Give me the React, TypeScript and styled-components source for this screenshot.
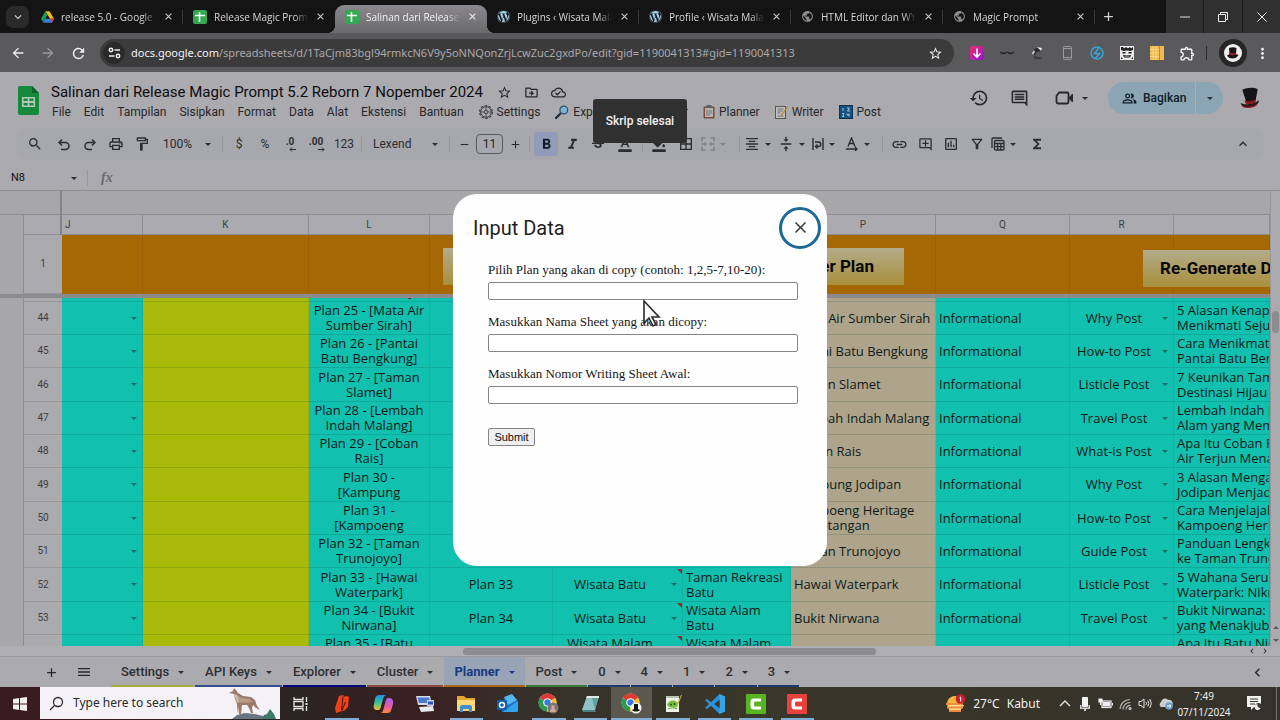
import React from 'react';
import styled, { createGlobalStyle, css } from 'styled-components';
import {
  MdAdd, MdArrowBack, MdArrowForward, MdBorderAll, MdChevronLeft, MdChevronRight, MdClose, MdFormatAlignCenter, MdFormatBold,
  MdFormatColorFill, MdFormatColorText, MdFormatItalic, MdFunctions, MdHistory, MdKeyboardArrowUp, MdLink, MdMenu,
  MdMoreVert, MdOutlineAddComment, MdOutlineCloudDone, MdOutlineDriveFileMove, MdOutlineExtension,
  MdOutlineFilterAlt, MdOutlineFormatPaint, MdOutlineInsertChart, MdOutlineInsertComment, MdOutlineLocalPrintshop,
  MdOutlinePeopleAlt, MdOutlineSettings, MdPublic, MdRefresh, MdRemove, MdSearch,
  MdStarBorder, MdStrikethroughS, MdVerticalAlignCenter, MdKeyboardArrowDown,
} from 'react-icons/md';
import { FaWordpress } from 'react-icons/fa';

const GlobalStyle = createGlobalStyle`
  *, *::before, *::after { box-sizing: border-box; }
  body { margin: 0; background: #a9a9ac; overflow: hidden; }
  button, input { font: inherit; color: inherit; }
  button { background: none; border: 0; padding: 0; }
  svg { display: block; flex: none; }
`;

const ui = '"Roboto", "Liberation Sans", sans-serif';
const win = '"Noto Sans", "Open Sans", sans-serif';
const cellFont = '"Open Sans", "Noto Sans", sans-serif';

const Screen = styled.div`
  display: flex;
  flex-direction: column;
  height: 100vh;
  font-family: ${ui};
  font-size: 12px;
`;

const Caret = styled.span<{ $color?: string; $up?: boolean }>`
  width: 0;
  height: 0;
  margin: 0 1px;
  flex: none;
  border: 3px solid transparent;
  border-top-color: ${(p) => p.$color ?? '#2c2d31'};
  border-bottom: 0;
  transform: ${(p) => (p.$up ? 'rotate(180deg)' : 'none')};
`;

/* ---------- browser tab strip ---------- */

const TabStrip = styled.div`
  display: flex;
  height: 33px;
  flex: none;
  background: #141415;
  color: #d6d6d6;
`;

const TabSearch = styled.button`
  width: 23px;
  height: 22px;
  margin: 6px 2px 0 6px;
  border-radius: 7px;
  background: #2a2a2b;
  display: grid;
  place-items: center;
`;

const BrowserTabBox = styled.div<{ $active?: boolean; $line?: boolean }>`
  flex: 0 1 152px;
  min-width: 0;
  position: relative;
  display: flex;
  align-items: center;
  gap: 7px;
  padding: 0 9px 0 10px;
  font: 10px/16px ${cellFont};

  ${(p) => p.$line && css`
    &::after {
      content: '';
      position: absolute;
      right: 0;
      width: 1px;
      height: 14px;
      background: #3a3a3b;
    }
  `}

  ${(p) => p.$active && css`
    margin-top: 5px;
    padding-bottom: 5px;
    color: #f2f2f2;
    background: linear-gradient(#8a888c, #6a696c);
    border-radius: 9px 9px 0 0;
    &::before, &::after {
      content: '';
      position: absolute;
      bottom: 0;
      width: 8px;
      height: 8px;
      background: radial-gradient(circle at 0 0, transparent 8px, #6a696c 8px);
    }
    &::before { left: -8px; }
    &::after { right: -8px; transform: scaleX(-1); }
  `}
`;

const TabTitle = styled.span`
  flex: 1;
  min-width: 0;
  overflow: hidden;
  white-space: nowrap;
  mask-image: linear-gradient(90deg, #000 86%, transparent);
`;

const IconButton = styled.button<{ $w?: number; $h?: number }>`
  width: ${(p) => p.$w ?? 24}px;
  height: ${(p) => p.$h ?? 24}px;
  flex: none;
  display: flex;
  align-items: center;
  justify-content: center;
`;

const WindowControls = styled.div`
  display: flex;
  margin-left: auto;
  background: #303031;
  button + button { border-left: 1px solid #1c1c1d; }
`;

/* ---------- browser toolbar ---------- */

const BrowserBar = styled.div`
  display: flex;
  align-items: center;
  height: 39px;
  flex: none;
  padding: 1px 10px 0 3px;
  background: #5a595b;
  color: #f1f1f1;
`;

const AddressBar = styled.div`
  flex: 1;
  min-width: 0;
  height: 28px;
  margin: 0 8px 0 7px;
  padding: 0 11px 0 3px;
  border-radius: 14px;
  background: #3b3b3c;
  display: flex;
  align-items: center;
`;

const SiteInfo = styled.button`
  width: 22px;
  height: 22px;
  flex: none;
  border-radius: 50%;
  background: #2a2a2b;
  display: grid;
  place-items: center;
`;

const Address = styled.div`
  flex: 1;
  min-width: 0;
  overflow: hidden;
  padding-left: 6px;
  font: 11px/20px ${win};
  color: #a9a9a9;
  white-space: nowrap;
  b { font-weight: 400; color: #f2f2f2; }
`;

const Separator = styled.span<{ $h?: number; $gap?: number; $color?: string }>`
  width: 1px;
  height: ${(p) => p.$h ?? 16}px;
  margin: 0 ${(p) => p.$gap ?? 2}px;
  flex: none;
  background: ${(p) => p.$color ?? '#97989c'};
`;

const ProfileButton = styled.button`
  width: 28px;
  height: 28px;
  margin: 0 7px 0 8px;
  border-radius: 50%;
  background: #262627;
  display: grid;
  place-items: center;
`;

/* ---------- spreadsheet header ---------- */

const Workspace = styled.main`
  flex: 1;
  min-height: 0;
  position: relative;
  display: flex;
  flex-direction: column;
  background: #abaaae;
  color: #26272b;
`;

const DocHeader = styled.header`
  display: flex;
  height: 56px;
  flex: none;
  padding: 0 19px 0 18px;
`;

const DocLogo = styled.div`
  width: 33px;
  padding-top: 14px;
  flex: none;
`;

const DocInfo = styled.div`
  flex: 1;
  min-width: 0;
  padding-top: 10px;
`;

const TitleRow = styled.div`
  display: flex;
  align-items: center;
  gap: 12px;
  height: 20px;
  h1 {
    margin: 0 2px 0 0;
    font: 400 15px/20px ${ui};
    color: #0d0d0e;
    white-space: nowrap;
  }
`;

const MenuBar = styled.nav`
  display: flex;
  align-items: center;
  gap: 13px;
  height: 20px;
  padding-left: 1px;
`;

const MenuItem = styled.button<{ $custom?: boolean }>`
  display: flex;
  align-items: center;
  gap: 4px;
  padding-left: ${(p) => (p.$custom ? 2 : 0)}px;
  font: 12px/20px ${ui};
  white-space: nowrap;
`;

const HeaderActions = styled.div`
  display: flex;
  align-items: center;
  height: 32px;
  margin-top: 10px;
`;

const MeetButton = styled.button`
  display: flex;
  align-items: center;
  gap: 5px;
  width: 54px;
  height: 24px;
  padding-left: 14px;
`;

const ShareGroup = styled.div`
  display: flex;
  height: 32px;
  margin: 0 16px 0 14px;
  border-radius: 16px;
  overflow: hidden;
  background: #8ba5b4;
  color: #0b1d2b;
`;

const ShareButton = styled.button`
  display: flex;
  align-items: center;
  gap: 6px;
  width: 88px;
  padding-left: 14px;
  border-right: 1px solid #9db3bf;
  font: 500 12px/20px ${ui};
`;

const Toolbar = styled.div`
  display: flex;
  align-items: center;
  gap: 2px;
  height: 32px;
  flex: none;
  margin: 0 15px;
  padding: 0 10px 0 8px;
  border-radius: 16px;
  background: #a7a8ad;
`;

const Tool = styled.button<{ $w?: number; $on?: boolean; $off?: boolean; $after?: number }>`
  width: ${(p) => p.$w ?? 24}px;
  height: 24px;
  margin-right: ${(p) => p.$after ?? 0}px;
  flex: none;
  display: flex;
  align-items: center;
  justify-content: center;
  border-radius: 3px;
  font: 12px/16px ${ui};
  background: ${(p) => (p.$on ? '#909cba' : 'transparent')};
  color: ${(p) => (p.$off ? '#828387' : '#2b2c30')};
`;

const SelectTool = styled(Tool)`
  justify-content: space-between;
  padding: 0 6px 0 7px;
`;

const DropTool = styled(Tool)`
  width: 32px;
  gap: 4px;
  justify-content: flex-start;
`;

const SizeInput = styled.input`
  width: 27px;
  height: 20px;
  padding: 0;
  border: 1px solid #5a5b5f;
  border-radius: 4px;
  background: transparent;
  text-align: center;
  font: 12px/16px ${ui};
`;

const Spacer = styled.span`
  flex: 1;
`;

const FormulaBar = styled.div`
  display: flex;
  align-items: center;
  height: 31px;
  flex: none;
  padding: 6px 11px 0;
  border-bottom: 1px solid #8d8d90;
`;

const NameBox = styled.input`
  width: 59px;
  border: 0;
  padding: 0;
  background: transparent;
  color: #111;
  font: 11px/16px ${ui};
`;

const Fx = styled.span`
  margin-left: 4px;
  font: italic 700 14px/16px "Liberation Serif", serif;
  color: #6a6b6f;
`;

/* ---------- grid ---------- */

const SheetArea = styled.div`
  flex: 1;
  min-height: 0;
  display: flex;
`;

const GridPane = styled.div`
  flex: 1;
  min-width: 0;
  display: flex;
  flex-direction: column;
  overflow: hidden;
`;

const OutlineStrip = styled.div`
  height: 24px;
  flex: none;
  background: #a7a7aa;
  border-bottom: 1px solid #8d8d90;
  &::before {
    content: '';
    display: block;
    width: 62px;
    height: 23px;
    border-right: 2px solid #858588;
  }
`;

const FrozenPane = styled.div`
  position: relative;
  flex: none;
  overflow: hidden;
  border-bottom: 4px solid #8b8a8c;
`;

const ScrollPane = styled.div`
  flex: 1;
  min-height: 0;
  overflow: hidden;
`;

const Grid = styled.table<{ $scrolled?: boolean }>`
  width: 100%;
  table-layout: fixed;
  border-collapse: separate;
  border-spacing: 0;
  margin-top: ${(p) => (p.$scrolled ? -29 : 0)}px;
  th, td { padding: 0; font-weight: 400; }
`;

const ColumnHead = styled.th<{ $start?: boolean }>`
  height: 20px;
  border-right: 1px solid #8d8d90;
  border-bottom: 1px solid #8d8d90;
  font: 10px/19px ${ui};
  color: #3d3e42;
  text-align: ${(p) => (p.$start ? 'left' : 'center')};
  text-indent: ${(p) => (p.$start ? 3 : 0)}px;
`;

const Corner = styled(ColumnHead)`
  border-right: 2px solid #858588;
  border-left: 1px solid #8d8d90;
`;

const Gutter = styled.td`
  background: #a7a7aa;
`;

const RowHead = styled.th<{ $tall?: boolean }>`
  height: ${(p) => (p.$tall ? 59 : 33)}px;
  border-left: 1px solid #8d8d90;
  border-bottom: 1px solid #97979a;
  background: #abaaae;
  font: 10px/14px ${ui};
  color: #3d3e42;
`;

const TitleCell = styled.td`
  background: #a66705;
  border-right: 1px solid #9a6005;
`;

const DataRow = styled.tr<{ $h: number }>`
  height: ${(p) => p.$h}px;
  th { height: ${(p) => p.$h}px; }
`;

const cellColors = { teal: '#12c0af', olive: '#aaba0a', tan: '#ada48b' };

const Cell = styled.td<{ $tone?: keyof typeof cellColors; $center?: boolean; $note?: boolean }>`
  position: relative;
  overflow: hidden;
  background: ${(p) => cellColors[p.$tone ?? 'teal']};
  border-right: 1px solid rgba(0, 60, 55, 0.1);
  border-bottom: 1px solid rgba(0, 60, 55, 0.16);
  color: #0d1a18;
  font: 13px/15px ${cellFont};
  text-align: ${(p) => (p.$center ? 'center' : 'left')};
  white-space: nowrap;
  ${(p) => p.$note && css`
    &::after {
      content: '';
      position: absolute;
      top: 1px;
      right: 0;
      border: solid transparent;
      border-width: 0 0 5px 5px;
      border-top: 5px solid #8c2a25;
      border-bottom: 0;
    }
  `}
`;

const CellText = styled.div`
  max-height: 30px;
  padding-left: 3px;
  overflow: hidden;
`;

const DropCell = styled.div`
  display: flex;
  align-items: center;
  gap: 3px;
  padding-right: 4px;
  > div { flex: 1; max-height: 30px; }
`;

const Drawing = styled.button<{ $x: number; $y: number; $w: number; $end?: boolean }>`
  position: absolute;
  left: ${(p) => p.$x}px;
  top: ${(p) => p.$y}px;
  width: ${(p) => p.$w}px;
  height: 37px;
  padding: 0 30px 0 17px;
  background: linear-gradient(#b3ac8a, #a98f3c);
  color: #080806;
  font: 700 17px/37px ${ui};
  text-align: ${(p) => (p.$end ? 'right' : 'left')};
  white-space: nowrap;
`;

const VerticalBar = styled.div`
  width: 10px;
  flex: none;
  border-left: 1px solid #98989b;
  display: flex;
  flex-direction: column;
  align-items: center;
  gap: 10px;
  padding: 120px 1px 4px;
`;

const Thumb = styled.span<{ $w: number; $h: number }>`
  width: ${(p) => p.$w}px;
  height: ${(p) => p.$h}px;
  flex: none;
  border-radius: 4px;
  background: #8c8b90;
`;

const HorizontalBar = styled.div`
  display: flex;
  align-items: center;
  gap: 3px;
  height: 11px;
  flex: none;
  padding: 0 10px 0 463px;
  background: #afaeb2;
  border-bottom: 1px solid #9a9a9d;
`;

/* ---------- sheet tabs ---------- */

const SheetTabs = styled.div`
  display: flex;
  align-items: stretch;
  height: 30px;
  flex: none;
  padding: 0 13px 0 35px;
`;

const SheetList = styled.div`
  display: flex;
  gap: 1px;
  margin-left: 11px;
`;

const SheetTab = styled.button<{ $line: string; $active?: boolean; $short?: boolean }>`
  display: flex;
  align-items: center;
  gap: 8px;
  padding: 2px ${(p) => (p.$short ? 8 : 9)}px 0 10px;
  border-bottom: 2px solid ${(p) => p.$line};
  background: ${(p) => (p.$active ? '#98a3b6' : 'transparent')};
  color: ${(p) => (p.$active ? '#183c80' : '#2e2f33')};
  font: ${(p) => (p.$active ? 700 : 500)} 13px/20px ${ui};
  white-space: nowrap;
`;

/* ---------- toast and dialog ---------- */

const Toast = styled.div`
  position: absolute;
  top: 27px;
  left: 0;
  right: 0;
  width: 94px;
  margin: 0 auto;
  border-radius: 3px;
  background: #303031;
  color: #f0f0f0;
  font: 500 12px/44px ${ui};
  text-align: center;
`;

const DialogLayer = styled.div`
  position: absolute;
  inset: 0;
  display: grid;
  place-items: center;
`;

const Dialog = styled.section`
  position: relative;
  width: 374px;
  height: 372px;
  border-radius: 24px;
  background: #fefefe;
  color: #1f1f1f;
`;

const DialogHeader = styled.div`
  display: flex;
  align-items: center;
  justify-content: space-between;
  height: 68px;
  padding: 0 6px 0 20px;
  h2 { margin: 0; font: 400 20px/28px ${ui}; }
`;

const CloseButton = styled.button`
  width: 42px;
  height: 42px;
  border: 3px solid #1c6a93;
  border-radius: 50%;
  display: grid;
  place-items: center;
  color: #3a3a3a;
`;

const Form = styled.form`
  display: flex;
  flex-direction: column;
  padding: 0 29px 0 35px;
`;

const Field = styled.div`
  display: flex;
  flex-direction: column;
  gap: 4px;
  margin-bottom: 14px;
  label { font: 13px/16px "Liberation Serif", serif; color: #161616; }
  input {
    height: 18px;
    padding: 0 2px;
    border: 1px solid #858585;
    border-radius: 2px;
    background: #fff;
    font: 12px/16px "Liberation Sans", sans-serif;
  }
`;

const SubmitButton = styled.button`
  align-self: flex-start;
  width: 47px;
  height: 18px;
  margin-top: 10px;
  border: 1px solid #858585;
  border-radius: 2px;
  background: #efefef;
  color: #111;
  font: 11px/16px "Liberation Sans", sans-serif;
`;

const Pointer = styled.svg`
  position: absolute;
  left: 189px;
  top: 105px;
`;

/* ---------- task bar ---------- */

const TaskBar = styled.footer`
  display: flex;
  height: 33px;
  flex: none;
  background: linear-gradient(90deg, #3a1b20 0, #2b2422 300px, #3a1f21 420px, #35302a 520px, #3a3729 750px, #34322a 100%);
  color: #f0f0f0;
  font: 12px/16px ${win};
`;

const StartButton = styled.button`
  width: 40px;
  flex: none;
  display: grid;
  place-items: center;
`;

const TaskSearch = styled.label`
  flex: none;
  width: 240px;
  height: 32px;
  display: flex;
  align-items: center;
  gap: 9px;
  padding: 0 2px 0 9px;
  background: #f4f2f6;
  color: #2a2a2c;
  input {
    flex: 1;
    min-width: 0;
    border: 0;
    padding: 0;
    background: none;
    font: 12px/16px ${win};
    &::placeholder { color: #2a2a2c; opacity: 1; }
  }
`;

const TaskApps = styled.div`
  flex: 0 1 538px;
  display: grid;
  grid-template-columns: repeat(13, 1fr);
`;

const TaskApp = styled.button<{ $open?: boolean; $active?: boolean }>`
  position: relative;
  display: grid;
  place-items: center;
  background: ${(p) => (p.$active ? '#5b594f' : 'transparent')};
  ${(p) => (p.$open || p.$active) && css`
    &::after {
      content: '';
      position: absolute;
      bottom: 0;
      left: ${p.$active ? 0 : 4}px;
      right: ${p.$active ? 0 : 4}px;
      height: 2px;
      background: #7fadd6;
    }
  `}
`;

const Tray = styled.div`
  display: flex;
  align-items: center;
  margin-left: auto;
  white-space: nowrap;
`;

const Weather = styled.button`
  display: flex;
  align-items: center;
  gap: 7px;
  margin-right: 15px;
`;

const Clock = styled.div`
  width: 58px;
  text-align: center;
  font: 10px/16px ${win};
`;

const TrayEnd = styled.span`
  width: 4px;
  height: 33px;
  border-left: 1px solid #77756c;
`;

/* ---------- drawings ---------- */

const DriveIcon = () => (
  <svg width="13" height="12" viewBox="0 0 26 23">
    <path d="M9 0h8l9 15h-8z" fill="#f7bb1c" />
    <path d="M9 0l4 7L4.500 22 0 15z" fill="#1a9c55" />
    <path d="M8.500 15H26l-4.500 8H4.500z" fill="#3b7de0" />
    <path d="M18 15h8l-4.500 8z" fill="#df4236" />
  </svg>
);

const SheetsTabIcon = () => (
  <svg width="14" height="14" viewBox="0 0 14 14">
    <rect width="14" height="14" rx="2" fill="#35a853" />
    <path d="M6.500 2v10M2 5.500h10" stroke="#f4fff6" strokeWidth="1.600" />
  </svg>
);

const SheetsLogo = () => (
  <svg width="21" height="29" viewBox="0 0 21 29">
    <path d="M2 0h12l7 7v20a2 2 0 0 1-2 2H2a2 2 0 0 1-2-2V2a2 2 0 0 1 2-2z" fill="#168a3c" />
    <path d="M14 0l7 7h-7z" fill="#0d6329" />
    <path d="M4 11h13v10H4zM5.500 12.500v2.500h4.200v-2.500zm5.800 0v2.500h4.200v-2.500zM5.500 17v2.500h4.200V17zm5.800 0v2.500h4.200V17z" fillRule="evenodd" fill="#b5c9ba" />
  </svg>
);

const TopHat = ({ size }: { size: number }) => (
  <svg width={size} height={size} viewBox="0 0 20 20">
    <path d="M3 2.500C7 .5 13 0 17 2L15 13l-8 2z" fill="#161416" />
    <path d="M5 12c3 1.500 7 1 10-.7l-.2 3c-3 1.500-6 1.500-9 .7z" fill="#8e1822" />
    <path d="M1.500 14.500c4 2 12 1.500 16.500-2.500.5 3-3.500 6-8.500 6.500S2 17 1.500 14.500z" fill="#2a1a1e" />
    <path d="M3 17.500c4 1.800 10 1.500 13.500-1.500" stroke="#a11d29" fill="none" />
  </svg>
);

const TuneIcon = () => (
  <svg width="13" height="12" viewBox="0 0 13 12" fill="none" stroke="#eee" strokeWidth="1.500">
    <circle cx="3" cy="3" r="1.700" /><path d="M6.500 3H12M1 9h5.500" /><circle cx="10" cy="9" r="1.700" />
  </svg>
);

const extensionIcons = [
  <svg key="download" width="14" height="14" viewBox="0 0 14 14">
    <defs><linearGradient id="dl" x1="0" y1="0" x2="1" y2="1"><stop stopColor="#ef2f6a" /><stop offset="1" stopColor="#8a13d8" /></linearGradient></defs>
    <rect width="14" height="14" rx="2.500" fill="url(#dl)" />
    <path d="M7 2.500v8.500M3.500 7.500L7 11l3.500-3.500" stroke="#fff" strokeWidth="1.600" fill="none" />
  </svg>,
  <svg key="lashes" width="14" height="6" viewBox="0 0 14 6" fill="none" stroke="#202022" strokeWidth="1.300">
    <path d="M.5 2c2 2 4 2 6 0M7.500 2c2 2 4 2 6 0" />
  </svg>,
  <svg key="agent" width="14" height="14" viewBox="0 0 14 14">
    <path d="M3 6C4 2 7 1 11 2l1 3-5 1-3 4z" fill="#2b2b2d" /><path d="M7 1l5 1-1 3z" fill="#eee" />
    <path d="M2 7l2-3 1 2-2 3z" fill="#ccc" /><path d="M4 10l8 2v1H4z" fill="#3b3b3d" />
  </svg>,
  <svg key="phone" width="9" height="14" viewBox="0 0 9 14" fill="none" stroke="#99999b">
    <rect x=".5" y=".5" width="8" height="13" rx="1" /><path d="M1 2.500h7M1 11.500h7" />
  </svg>,
  <svg key="bolt" width="14" height="14" viewBox="0 0 14 14" fill="none" stroke="#35a8e0" strokeWidth="1.500">
    <circle cx="7" cy="7" r="6" /><path d="M8.500 2.500L4.500 7.500h5L5.500 12" />
  </svg>,
  <svg key="face" width="14" height="14" viewBox="0 0 14 14">
    <rect width="14" height="14" fill="#e9e9e9" />
    <path d="M1 1h2l1 1.500L6 1l2 1.500L10 1l1 1.500L13 1v3l-3 1-2-.5H6L4 5 1 4zM2.500 6h3v1.500h-3zM8.500 6h3v1.500h-3zM3 9h8l-1 2.500H4zM1 11l2 2H1zM13 11l-2 2h2z" fill="#1c1c1c" />
    <path d="M4.500 10h5" stroke="#e9e9e9" strokeWidth=".8" />
  </svg>,
  <svg key="grid" width="14" height="14" viewBox="0 0 14 14">
    <rect width="14" height="14" fill="#f2b84b" />
    <path d="M0 3.500h9M0 7h9M0 10.500h9M3 0v14M6 0v14" stroke="#fbe3ab" strokeWidth=".7" /><path d="M9.500 0v14" stroke="#c98820" />
  </svg>,
  <MdOutlineExtension key="puzzle" size={17} />,
];

const MagnifierEmoji = () => (
  <svg width="14" height="14" viewBox="0 0 14 14">
    <path d="M6 8l-5 5" stroke="#1c2836" strokeWidth="2.200" strokeLinecap="round" />
    <circle cx="8.800" cy="5" r="3.900" fill="#7db4d6" stroke="#33506a" strokeWidth="1.200" />
  </svg>
);
const GearEmoji = () => (
  <svg width="14" height="14" viewBox="0 0 14 14" fill="none" stroke="#3e3f43">
    <circle cx="7" cy="7" r="5.300" strokeWidth="1" /><circle cx="7" cy="7" r="6.400" strokeWidth="1.200" strokeDasharray="2.500 1.500" />
    <circle cx="7" cy="7" r="1.800" /><path d="M7 1.500v3.500M7 9v3.500M1.500 7H5M9 7h3.500" strokeWidth=".8" />
  </svg>
);
const ClipboardEmoji = () => (
  <svg width="12" height="14" viewBox="0 0 12 14">
    <rect x=".5" y="1.500" width="11" height="12" rx="1" fill="#7b4a3a" /><rect x="2" y="3" width="8" height="9" fill="#b7b2b0" />
    <path d="M3.500 0h5v3h-5z" fill="#5d6064" /><path d="M3 6h6M3 8h6M3 10h4" stroke="#77797c" />
  </svg>
);
const MemoEmoji = () => (
  <svg width="13" height="14" viewBox="0 0 13 14">
    <rect x=".5" y="1.500" width="10" height="12" fill="#c0bfc0" stroke="#54565a" />
    <path d="M2.500 4h6M2.500 6h5M2.500 8h3M2.500 11h6" stroke="#6f7175" />
    <path d="M12.500 1L6 9.500l-1 2 2-1L13 2z" fill="#b98a22" />
  </svg>
);
const NumbersEmoji = () => (
  <svg width="14" height="14" viewBox="0 0 14 14">
    <rect x=".5" y=".5" width="13" height="13" fill="#14507e" stroke="#0c3352" />
    <path d="M4 3v3M8 3h2.500L8.500 6h2.500M3 8.500h2l-1 1.500 1 1.500H3M8 8.500V10h2.500M10 8.500v3" stroke="#a6c4d6" fill="none" />
  </svg>
);

const MeetIcon = () => (
  <svg width="22" height="18" viewBox="0 0 22 18" fill="none" stroke="currentColor" strokeWidth="1.800">
    <path d="M5 3.500h8a1.500 1.500 0 0 1 1.500 1.500v8a1.500 1.500 0 0 1-1.500 1.500H4A1.500 1.500 0 0 1 2.500 13V7z" strokeLinejoin="round" />
    <path d="M15 9l3.500-4v8z" fill="currentColor" strokeWidth="1" />
  </svg>
);

const UndoIcon = ({ redo }: { redo?: boolean }) => (
  <svg width="12" height="13" viewBox="0 0 12 13" fill="none" stroke="currentColor" strokeWidth="1.500">
    {redo ? <path d="M3 11.500h5M8 1.500L11 4.500 8 7.500M11 4.500H4.500a3.300 3.300 0 0 0 0 7H5" /> : <path d="M4 1.500L1 4.500l3 3M1 4.500h6.500a3.300 3.300 0 0 1 0 7H3" />}
  </svg>
);

const DecimalBox = styled.span`
  display: flex;
  flex-direction: column;
  align-items: flex-end;
  span { font: 700 10px/10px ${ui}; padding-right: 2px; }
`;
const DecimalIcon = ({ more }: { more?: boolean }) => (
  <DecimalBox>
    <span>{more ? '.00' : '.0'}</span>
    <svg width="7" height="5" viewBox="0 0 7 5" fill="none" stroke="currentColor">
      {more ? <path d="M0 2.500h6M4 .5l2 2-2 2" /> : <path d="M1 2.500h6M3 .5l-2 2 2 2" />}
    </svg>
  </DecimalBox>
);

const MergeIcon = () => (
  <svg width="14" height="14" viewBox="0 0 14 14" fill="none" stroke="currentColor" strokeWidth="1.500">
    <path d="M4.500 1H1v3M9.500 1H13v3M4.500 13H1v-3M9.500 13H13v-3M0 7h5M9 7h5M3.500 5.500L5 7 3.500 8.500M10.500 5.500L9 7l1.500 1.500" />
  </svg>
);
const WrapIcon = () => (
  <svg width="12" height="14" viewBox="0 0 12 14" fill="none" stroke="currentColor" strokeWidth="1.400">
    <path d="M1 1v12M11 1v12M3 5h3.500a2 2 0 0 1 0 4.500H4M5.500 7.500l-2 2 2 2" />
  </svg>
);
const RotateIcon = () => (
  <svg width="13" height="14" viewBox="0 0 13 14" fill="none" stroke="currentColor" strokeWidth="1.400">
    <path d="M2 9.500L5.500 1 9 9.500M3.500 6.500h4M0 12h11M9 10l2 2-2 2" />
  </svg>
);
const TableViewIcon = () => (
  <svg width="14" height="14" viewBox="0 0 14 14" fill="none" stroke="currentColor" strokeWidth="1.300">
    <path d="M1 11V2a1 1 0 0 1 1-1h9" /><rect x="3.500" y="3.500" width="9.500" height="9.500" rx="1" />
    <path d="M3.500 6.500H13M3.500 9.700H13M6.700 6.500V13M9.800 6.500V13" />
  </svg>
);

const WindowsLogo = () => (
  <svg width="14" height="14" viewBox="0 0 14 14" fill="#f2f0f0">
    <path d="M0 2l6-.9v5.500H0zM7 1l7-1v6.600H7zM0 7.500h6v5.400L0 12zM7 7.500h7V14l-7-1z" />
  </svg>
);
const Wolf = () => (
  <svg width="50" height="32" viewBox="0 0 50 32">
    <path d="M4 32l5-4 8-2 10 1 8 2 4 3z" fill="#6b7482" />
    <path d="M34 32l2-4 3-1 3-5 4 5 2 5z" fill="#3e7a68" />
    <path d="M1 6l4-2 1-3 2 2 2 3 5 3 8 1 4 3 2 6 3 4-4-2-3-3-1 3 1 5h-2l-2-5-2-3-5 0-1 9h-2l-1-8-1 8H9l0-10-2-5-1-5z" fill="#9c7a68" />
    <path d="M8 8l6 3 8 1 2 3-9 1-5-1z" fill="#b99b88" />
    <path d="M6 7l3 1 2 8-2-1z" fill="#d9c2b2" />
  </svg>
);

const Chrome = ({ hat }: { hat?: boolean }) => (
  <svg width="21" height="21" viewBox="0 0 21 21">
    <circle cx="9.500" cy="9.500" r="9" fill="#e0e0e0" />
    <path d="M9.500 9.500L1.700 5A9 9 0 0 1 17.300 5z" fill="#dd3b30" />
    <path d="M9.500 9.500L1.700 5a9 9 0 0 0 7.300 13.500z" fill="#2d9a4d" />
    <path d="M9.500 9.500L17.300 5A9 9 0 0 1 9 18.500z" fill="#f6c322" />
    <circle cx="9.500" cy="9.500" r="4.300" fill="#fff" /><circle cx="9.500" cy="9.500" r="3.200" fill="#3b78e0" />
    <circle cx="15" cy="15" r="5.500" fill={hat ? '#f3f3f3' : '#7c7478'} />
    {hat ? <path d="M13 11h4v5l2 1c-2 2-6 2-8 0l2-1z" fill="#161314" /> : <path d="M12 19c0-5 6-5 6 0z M13.500 12.500h3v3h-3z" fill="#d3aa98" />}
  </svg>
);
const CamtasiaIcon = ({ color }: { color: string }) => (
  <svg width="20" height="20" viewBox="0 0 20 20">
    <rect width="20" height="20" rx="1" fill={color} />
    <path d="M15 4.500H8A3.500 3.500 0 0 0 4.500 8v4A3.500 3.500 0 0 0 8 15.500h7v-3H9.500a1.500 1.500 0 0 1-1.500-1.500V9a1.500 1.500 0 0 1 1.500-1.500H15z" fill="#fff" />
  </svg>
);

const taskApps: { name: string; open?: boolean; active?: boolean; icon: React.ReactNode }[] = [
  { name: 'Task view', icon: (
    <svg width="16" height="14" viewBox="0 0 16 14" fill="none" stroke="#e8e6e6" strokeWidth="1.300">
      <path d="M1 0v2.500h9V0M1 14v-2.500h9V14M13.500 0v5M13.500 9v5" /><rect x="1" y="4.500" width="9" height="5" /><path d="M12.500 7h2" strokeWidth="2" />
    </svg>) },
  { name: 'Nitro', open: true, icon: (
    <svg width="16" height="20" viewBox="0 0 16 20"><path d="M5 2l4-1 1 1v9l-2 6-6 2-1-5z" fill="#f0411f" /><path d="M9 3l4-1 2 1-1 10-4 4-3-1 1-6z" fill="#f0411f" /><path d="M9 2.500L7.500 16M11.500 8L8 16" stroke="#3a1710" strokeWidth="1" fill="none" /></svg>) },
  { name: 'Copilot', icon: (
    <svg width="21" height="20" viewBox="0 0 21 20">
      <defs><linearGradient id="cp" x1="0" y1="0" x2="0" y2="1"><stop stopColor="#1f8ee8" /><stop offset=".5" stopColor="#35c39a" /><stop offset="1" stopColor="#f2c02c" /></linearGradient>
        <linearGradient id="cq" x1="0" y1="0" x2="0" y2="1"><stop stopColor="#a35ff0" /><stop offset=".6" stopColor="#ee5aa0" /><stop offset="1" stopColor="#f58b3c" /></linearGradient></defs>
      <path d="M6 1h8c-2 0-3 1-4 4L7.500 14c-.5 1.500-1 2-2.500 2-4 0-5-2-4-6l1-5c.7-3 2-4 4-4z" fill="url(#cp)" />
      <path d="M15.500 4c4 0 5 2 4.500 6l-1.500 5c-.8 3-2 4-4 4H7c2 0 2.500-1 3.200-3L13 6c.5-1.500 1-2 2.500-2z" fill="url(#cq)" />
    </svg>) },
  { name: 'Remote PC', icon: (
    <svg width="20" height="18" viewBox="0 0 20 18"><path d="M1 1h14l2 9H3z" fill="#d7dbe8" /><path d="M2.500 2.500h11.500l1.500 5.500H4z" fill="#4b79d0" /><path d="M4 12l14-1 1 5-13 1z" fill="#e8e9ef" /><path d="M12 5h7v6h-7z" fill="#c9cede" /><path d="M13 6.500h5v3h-5z" fill="#2f56b4" /></svg>) },
  { name: 'File Explorer', open: true, icon: (
    <svg width="20" height="17" viewBox="0 0 20 17"><path d="M1 1h7l2 2h9v13H1z" fill="#e0a62f" /><path d="M1 5h18v11H1z" fill="#fbd775" /><path d="M4 17v-5a2 2 0 0 1 2-2h8a2 2 0 0 1 2 2v5h-3v-3H7v3z" fill="#3f8fd0" /></svg>) },
  { name: 'Outlook', icon: (
    <svg width="21" height="19" viewBox="0 0 21 19"><path d="M5 7l8-6 8 6v11H5z" fill="#1c6fc4" /><path d="M7 3l8-3 5 6-9 5z" fill="#56b6ef" /><path d="M21 7v9a2 2 0 0 1-2 2H6l9-7z" fill="#2fa4ea" /><rect y="6" width="10" height="10" rx="1" fill="#0f5cae" /><circle cx="5" cy="11" r="2.500" fill="none" stroke="#fff" strokeWidth="1.400" /></svg>) },
  { name: 'Chrome', open: true, icon: <Chrome /> },
  { name: 'Notes', open: true, icon: (
    <svg width="18" height="18" viewBox="0 0 18 18"><path d="M6 1h12l-4 14H1z" fill="#8fc3c4" /><path d="M6 1h12v2H5z" fill="#dfeaea" /><path d="M1 15h13l1 2H2z" fill="#4d7f83" /><path d="M11 3l6 0-3 12z" fill="#5fa0a3" /></svg>) },
  { name: 'Chrome profile', active: true, icon: <Chrome hat /> },
  { name: 'Notepad++', open: true, icon: (
    <svg width="19" height="19" viewBox="0 0 19 19"><path d="M2 2h13v16H2z" fill="#ecf3e4" /><path d="M3 11c1-5 8-6 11-2l-1 4c-3 2-8 1-10-2z" fill="#7bbf3d" /><path d="M4 14c3 1 6 1 9 0v1H4z" fill="#4f8f28" /><circle cx="7" cy="10.500" r="1" fill="#234d12" /><circle cx="10.500" cy="10" r="1" fill="#234d12" /><path d="M18 1l-4 10-1 2 0-3 4-9z" fill="#d8b23a" /><path d="M2 2h13v2H2z" fill="#b9c4b0" /></svg>) },
  { name: 'VS Code', open: true, icon: (
    <svg width="20" height="20" viewBox="0 0 20 20"><path d="M14.500 0L20 2.500v15L14.500 20 6 11.800l-4 3.200-2-1L4 10 0 6l2-1 4 3.200zM15 5.500L9 10l6 4.500z" fill="#2a93dc" fillRule="evenodd" /><path d="M14.500 0L20 2.500v15L14.500 20z" fill="#3fb0f4" fillOpacity=".6" /></svg>) },
  { name: 'Camtasia', open: true, icon: <CamtasiaIcon color="#56b520" /> },
  { name: 'Camtasia Recorder', open: true, icon: <CamtasiaIcon color="#e8403c" /> },
];

const trayIcons = [
  <svg key="up" width="12" height="7" viewBox="0 0 12 7" fill="none" stroke="#e8e8e8" strokeWidth="1.300"><path d="M1 6l5-5 5 5" /></svg>,
  <svg key="mic" width="10" height="14" viewBox="0 0 10 14" fill="#f2f2f2"><rect x="2" width="6" height="10" rx="1" /><path d="M0 8h1.500v2.500h7V8H10v4H6v2H4v-2H0z" fill="#cfcfcf" /></svg>,
  <svg key="battery" width="15" height="11" viewBox="0 0 15 11" fill="none" stroke="#f0f0f0" strokeWidth="1.200"><rect x="4" y="3" width="9" height="6.500" /><path d="M5.500 4.500h6v3.500h-6zM14.500 5v2.500M.5 1h4M1 1v3h3V1M2.500 4v3" fill="#f0f0f0" /></svg>,
  <svg key="wifi" width="13" height="12" viewBox="0 0 13 12" fill="none" stroke="#b9b9b6" strokeWidth="1.200"><path d="M1 11A10 10 0 0 1 11 1.500M4 11.500A7 7 0 0 1 11.500 4.500M7 11.500a4 4 0 0 1 4.500-4" /><circle cx="11" cy="10.500" r="1" fill="#fff" /></svg>,
  <svg key="sound" width="14" height="11" viewBox="0 0 14 11" fill="none" stroke="#e6e6e4"><path d="M1 3.500h2L6 1v9L3 7.500H1zM8 4q1 1.500 0 3M9.800 2.500q2 3 0 6M11.800 1q3 4.500 0 9" /></svg>,
  <svg key="cloud" width="15" height="13" viewBox="0 0 15 13"><path d="M3 10a3 3 0 0 1 0-5 4 4 0 0 1 7-2 3 3 0 0 1 2 7z" fill="#cfcfd0" /><circle cx="11" cy="9" r="3.800" fill="#6f9fd0" /><path d="M9 9h4M11.500 7.500L13 9l-1.500 1.500" stroke="#fff" fill="none" /></svg>,
];

/* ---------- data ---------- */

const browserTabs = [
  { title: 'release 5.0 - Google Drive', icon: <DriveIcon /> },
  { title: 'Release Magic Prompt', icon: <SheetsTabIcon /> },
  { title: 'Salinan dari Release Magic', icon: <SheetsTabIcon /> },
  { title: 'Plugins ‹ Wisata Malang', icon: <FaWordpress size={13} color="#9fd0e4" /> },
  { title: 'Profile ‹ Wisata Malang', icon: <FaWordpress size={13} color="#9fd0e4" /> },
  { title: 'HTML Editor dan WYSIWYG', icon: <MdPublic size={13} color="#8a8a8a" /> },
  { title: 'Magic Prompt', icon: <MdPublic size={13} color="#8a8a8a" /> },
];

const menus: [string, React.ReactNode?][] = [
  ['File'], ['Edit'], ['Tampilan'], ['Sisipkan'], ['Format'], ['Data'], ['Alat'], ['Ekstensi'], ['Bantuan'],
  ['Settings', <GearEmoji />], ['Explorer', <MagnifierEmoji />], ['Cluster', <MdOutlineSettings size={14} />],
  ['Planner', <ClipboardEmoji />], ['Writer', <MemoEmoji />], ['Post', <NumbersEmoji />],
];

const columns = ['J', 'K', 'L', '', '', '', 'P', 'Q', 'R', ''];
const widths = [23, 39, 81, 166, 121, 123, 130, 108, 145, 134, 104];

type Entry = { no: number; plan: string; step?: string; cluster?: string; topic?: string; place?: string; intent?: string; kind?: string; title?: string };
const entries: Entry[] = [
  { no: 43, plan: 'Plan 24 - [Sumber\nMaron Kanan]' },
  { no: 44, plan: 'Plan 25 - [Mata Air\nSumber Sirah]', place: 'Mata Air Sumber Sirah', kind: 'Why Post', title: '5 Alasan Kenapa\nMenikmati Sejuk' },
  { no: 45, plan: 'Plan 26 - [Pantai\nBatu Bengkung]', place: 'Pantai Batu Bengkung', kind: 'How-to Post', title: 'Cara Menikmati\nPantai Batu Ben' },
  { no: 46, plan: 'Plan 27 - [Taman\nSlamet]', place: 'Taman Slamet', kind: 'Listicle Post', title: '7 Keunikan Tam\nDestinasi Hijau' },
  { no: 47, plan: 'Plan 28 - [Lembah\nIndah Malang]', place: 'Lembah Indah Malang', kind: 'Travel Post', title: 'Lembah Indah M\nAlam yang Mem' },
  { no: 48, plan: 'Plan 29 - [Coban\nRais]', place: 'Coban Rais', kind: 'What-is Post', title: 'Apa Itu Coban R\nAir Terjun Mena' },
  { no: 49, plan: 'Plan 30 -\n[Kampung', place: 'Kampung Jodipan', kind: 'Why Post', title: '3 Alasan Menga\nJodipan Menjad' },
  { no: 50, plan: 'Plan 31 -\n[Kampoeng', place: 'Kampoeng Heritage\nKajoetangan', kind: 'How-to Post', title: 'Cara Menjelajah\nKampoeng Heri' },
  { no: 51, plan: 'Plan 32 - [Taman\nTrunojoyo]', place: 'Taman Trunojoyo', kind: 'Guide Post', title: 'Panduan Lengk\nke Taman Truno' },
  { no: 52, plan: 'Plan 33 - [Hawai\nWaterpark]', step: 'Plan 33', cluster: 'Wisata Batu', topic: 'Taman Rekreasi\nBatu', place: 'Hawai Waterpark', kind: 'Listicle Post', title: '5 Wahana Seru\nWaterpark: Nikm' },
  { no: 53, plan: 'Plan 34 - [Bukit\nNirwana]', step: 'Plan 34', cluster: 'Wisata Batu', topic: 'Wisata Alam\nBatu', place: 'Bukit Nirwana', kind: 'Travel Post', title: 'Bukit Nirwana: P\nyang Menakjubk' },
  { no: 54, plan: 'Plan 35 - [Batu\nNight]', step: 'Plan 35', cluster: 'Wisata Malam\nBatu', topic: 'Wisata Malam\nBatu', place: 'Batu Night Spectacular', kind: 'What-is Post', title: 'Apa Itu Batu Nig\nSpectacular' },
];

const sheets: { name: string; line: string; active?: boolean }[] = [
  { name: 'Settings', line: '#a3ad3a' }, { name: 'API Keys', line: '#34508f' }, { name: 'Explorer', line: '#06067c' },
  { name: 'Cluster', line: '#8f4a44' }, { name: 'Planner', line: '#a8691c', active: true }, { name: 'Post', line: '#3c7a3a' },
  { name: '0', line: '#1c3a6c' }, { name: '4', line: '#1c3a6c' }, { name: '1', line: '#1c3a6c' }, { name: '2', line: '#1c3a6c' }, { name: '3', line: '#1c3a6c' },
];

const fields = [
  ['plan', 'Pilih Plan yang akan di copy (contoh: 1,2,5-7,10-20):'],
  ['sheet', 'Masukkan Nama Sheet yang akan dicopy:'],
  ['number', 'Masukkan Nomor Writing Sheet Awal:'],
];

const Lines = ({ text = '' }: { text?: string }) => (
  <>{text.split('\n').map((line, i) => <React.Fragment key={i}>{i > 0 && <br />}{line}</React.Fragment>)}</>
);

const Columns = () => (
  <colgroup>{widths.map((w, i) => <col key={i} width={w} />)}<col /></colgroup>
);

const Dropdown = ({ text }: { text?: string }) => (
  <DropCell><div><Lines text={text} /></div><Caret $color="#1a6f68" /></DropCell>
);

export default function App() {
  return (
    <Screen>
      <GlobalStyle />

      <TabStrip>
        <TabSearch aria-label="Search tabs"><MdKeyboardArrowDown size={14} /></TabSearch>
        {browserTabs.map((tab, i) => (
          <BrowserTabBox key={i} $active={i === 2} $line={i === 0 || i > 2}>
            {tab.icon}
            <TabTitle>{tab.title}</TabTitle>
            <IconButton $w={11} $h={16} aria-label="Close tab"><MdClose size={11} /></IconButton>
          </BrowserTabBox>
        ))}
        <IconButton $w={26} $h={33} aria-label="New tab"><MdAdd size={15} /></IconButton>
        <WindowControls>
          <IconButton $w={37} $h={33} aria-label="Minimize"><svg width="10" height="2"><path d="M0 1h10" stroke="#ddd" /></svg></IconButton>
          <IconButton $w={39} $h={33} aria-label="Restore">
            <svg width="10" height="10" viewBox="0 0 10 10" fill="none" stroke="#eee"><path d="M.5 2.500h7v7h-7zM2.500 2.500v-2h7v7h-2" /></svg>
          </IconButton>
          <IconButton $w={38} $h={33} aria-label="Close"><svg width="10" height="10" viewBox="0 0 10 10" stroke="#eee"><path d="M.5.5l9 9M9.500.5l-9 9" /></svg></IconButton>
        </WindowControls>
      </TabStrip>

      <BrowserBar>
        <IconButton $w={30} aria-label="Back"><MdArrowBack size={16} /></IconButton>
        <IconButton $w={30} aria-label="Forward"><MdArrowForward size={16} color="#9a9a9b" /></IconButton>
        <IconButton $w={30} aria-label="Reload"><MdRefresh size={17} /></IconButton>
        <AddressBar>
          <SiteInfo aria-label="Site information"><TuneIcon /></SiteInfo>
          <Address><b>docs.google.com</b>/spreadsheets/d/1TaCjm83bgl94rmkcN6V9y5oNNQonZrjLcwZuc2gxdPo/edit?gid=1190041313#gid=1190041313</Address>
          <MdStarBorder size={15} />
        </AddressBar>
        {extensionIcons.map((icon, i) => <IconButton key={i} $w={30} aria-label={`Extension ${i + 1}`}>{icon}</IconButton>)}
        <Separator $h={14} $gap={4} $color="#2b2b2c" />
        <ProfileButton aria-label="Profile">
          <svg width="18" height="18" viewBox="0 0 18 18"><circle cx="9" cy="9" r="9" fill="#efefef" /><path d="M5 4q4-1.500 7.500 0l-.5 6 2.500 1q-2 3.500-6 3.500T3 11.500L5.500 10z" fill="#1a1517" /><path d="M5.400 8.500q3.500 1.500 6.700 0v2q-3.500 1.500-6.700 0z" fill="#9a1d28" /></svg>
        </ProfileButton>
        <IconButton $w={16} aria-label="Menu"><MdMoreVert size={17} /></IconButton>
      </BrowserBar>

      <Workspace>
        <DocHeader>
          <DocLogo><SheetsLogo /></DocLogo>
          <DocInfo>
            <TitleRow>
              <h1>Salinan dari Release Magic Prompt 5.2 Reborn 7 Nopember 2024</h1>
              <MdStarBorder size={15} /><MdOutlineDriveFileMove size={15} /><MdOutlineCloudDone size={15} />
            </TitleRow>
            <MenuBar>
              {menus.map(([name, icon]) => <MenuItem key={name} $custom={!!icon}>{icon}{name}</MenuItem>)}
            </MenuBar>
          </DocInfo>
          <HeaderActions>
            <IconButton $w={41} aria-label="History"><MdHistory size={20} /></IconButton>
            <IconButton $w={41} aria-label="Comments"><MdOutlineInsertComment size={19} /></IconButton>
            <MeetButton aria-label="Meet"><MeetIcon /><Caret /></MeetButton>
            <ShareGroup>
              <ShareButton><MdOutlinePeopleAlt size={15} />Bagikan</ShareButton>
              <IconButton $w={27} $h={32} aria-label="Share options"><Caret /></IconButton>
            </ShareGroup>
            <TopHat size={22} />
          </HeaderActions>
        </DocHeader>

        <Toolbar>
          <Tool $after={3} aria-label="Search"><MdSearch size={16} /></Tool>
          <Tool aria-label="Undo"><UndoIcon /></Tool>
          <Tool aria-label="Redo"><UndoIcon redo /></Tool>
          <Tool aria-label="Print"><MdOutlineLocalPrintshop size={16} /></Tool>
          <Tool aria-label="Paint format"><MdOutlineFormatPaint size={16} /></Tool>
          <SelectTool $w={62}>100%<Caret /></SelectTool>
          <Separator />
          <Tool>$</Tool>
          <Tool>%</Tool>
          <Tool aria-label="Decrease decimals"><DecimalIcon /></Tool>
          <Tool aria-label="Increase decimals"><DecimalIcon more /></Tool>
          <Tool $w={26}>123</Tool>
          <Separator />
          <SelectTool $w={79}>Lexend<Caret /></SelectTool>
          <Separator />
          <Tool $w={20} aria-label="Smaller"><MdRemove size={13} /></Tool>
          <SizeInput aria-label="Font size" defaultValue="11" />
          <Tool $w={20} aria-label="Larger"><MdAdd size={13} /></Tool>
          <Separator />
          <Tool $on aria-label="Bold"><MdFormatBold size={17} color="#10182c" /></Tool>
          <Tool aria-label="Italic"><MdFormatItalic size={17} /></Tool>
          <Tool aria-label="Strikethrough"><MdStrikethroughS size={16} /></Tool>
          <Tool $w={26} aria-label="Text color"><MdFormatColorText size={16} /></Tool>
          <Separator />
          <Tool aria-label="Fill color"><MdFormatColorFill size={16} /></Tool>
          <Tool $w={26} aria-label="Borders"><MdBorderAll size={16} /></Tool>
          <DropTool $off $after={2} aria-label="Merge"><MergeIcon /><Caret $color="#828387" /></DropTool>
          <Separator />
          <DropTool aria-label="Align"><MdFormatAlignCenter size={16} /><Caret /></DropTool>
          <DropTool aria-label="Vertical align"><MdVerticalAlignCenter size={16} /><Caret /></DropTool>
          <DropTool aria-label="Wrap"><WrapIcon /><Caret /></DropTool>
          <DropTool aria-label="Rotate"><RotateIcon /><Caret /></DropTool>
          <Separator />
          <Tool aria-label="Link"><MdLink size={17} /></Tool>
          <Tool aria-label="Add comment"><MdOutlineAddComment size={15} /></Tool>
          <Tool aria-label="Chart"><MdOutlineInsertChart size={16} /></Tool>
          <Tool aria-label="Filter"><MdOutlineFilterAlt size={16} /></Tool>
          <DropTool aria-label="Filter views"><TableViewIcon /><Caret /></DropTool>
          <Tool aria-label="Functions"><MdFunctions size={16} /></Tool>
          <Spacer />
          <Tool aria-label="Hide menus"><MdKeyboardArrowUp size={16} /></Tool>
        </Toolbar>

        <FormulaBar>
          <NameBox aria-label="Name box" defaultValue="N8" />
          <Caret />
          <Separator $gap={9} />
          <Fx>fx</Fx>
        </FormulaBar>

        <SheetArea>
          <GridPane>
            <OutlineStrip />
            <FrozenPane>
              <Grid>
                <Columns />
                <thead>
                  <tr>
                    <Gutter as="th" />
                    <Corner />
                    {columns.map((c, i) => <ColumnHead key={i} scope="col" $start={i === 0}>{c}</ColumnHead>)}
                  </tr>
                </thead>
                <tbody>
                  <tr>
                    <Gutter />
                    <RowHead scope="row" $tall>1</RowHead>
                    {columns.map((c, i) => <TitleCell key={i} />)}
                  </tr>
                </tbody>
              </Grid>
              <Drawing $x={443} $y={33} $w={200} aria-label="Generate" />
              <Drawing $x={704} $y={33} $w={200} $end>Cluster Plan</Drawing>
              <Drawing $x={1143} $y={35} $w={216}>Re-Generate Data</Drawing>
            </FrozenPane>
            <ScrollPane>
              <Grid $scrolled>
                <Columns />
                <tbody>
                  {entries.map((e, i) => (
                    <DataRow key={e.no} $h={i % 3 === 0 && i > 0 ? 34 : 33}>
                      <Gutter />
                      <RowHead scope="row">{e.no}</RowHead>
                      <Cell><Dropdown /></Cell>
                      <Cell $tone="olive" />
                      <Cell $center><Lines text={e.plan} /></Cell>
                      <Cell $center>{e.step}</Cell>
                      <Cell $center $note><Dropdown text={e.cluster} /></Cell>
                      <Cell><CellText><Lines text={e.topic} /></CellText></Cell>
                      <Cell $tone="tan"><CellText><Lines text={e.place} /></CellText></Cell>
                      <Cell><CellText>Informational</CellText></Cell>
                      <Cell $center><Dropdown text={e.kind} /></Cell>
                      <Cell><CellText><Lines text={e.title} /></CellText></Cell>
                    </DataRow>
                  ))}
                </tbody>
              </Grid>
            </ScrollPane>
          </GridPane>
          <VerticalBar>
            <Thumb $w={7} $h={22} />
            <Spacer />
            <Caret $up $color="#5c5c60" />
            <Caret $color="#5c5c60" />
          </VerticalBar>
        </SheetArea>
        <HorizontalBar>
          <Thumb $w={413} $h={7} />
          <Spacer />
          <MdChevronLeft size={10} /><MdChevronRight size={10} />
        </HorizontalBar>

        <SheetTabs>
          <IconButton $w={32} $h={30} aria-label="Add sheet"><MdAdd size={15} /></IconButton>
          <IconButton $w={33} $h={30} aria-label="All sheets"><MdMenu size={16} /></IconButton>
          <SheetList>
            {sheets.map((s) => (
              <SheetTab key={s.name} $line={s.line} $active={s.active} $short={s.name.length === 1}>
                {s.name}<Caret $color={s.active ? '#183c80' : undefined} />
              </SheetTab>
            ))}
          </SheetList>
          <Spacer />
          <IconButton $w={20} $h={30} aria-label="Show side panel"><MdChevronLeft size={17} /></IconButton>
        </SheetTabs>

        <Toast role="status">Skrip selesai</Toast>

        <DialogLayer>
          <Dialog role="dialog" aria-labelledby="dialog-title">
            <DialogHeader>
              <h2 id="dialog-title">Input Data</h2>
              <CloseButton aria-label="Tutup"><MdClose size={19} /></CloseButton>
            </DialogHeader>
            <Form onSubmit={(e) => e.preventDefault()}>
              {fields.map(([id, label]) => (
                <Field key={id}><label htmlFor={id}>{label}</label><input id={id} type="text" /></Field>
              ))}
              <SubmitButton type="submit">Submit</SubmitButton>
            </Form>
            <Pointer width="19" height="29" viewBox="0 0 19 29">
              <path d="M2 2v22l5-5 4 8 3-1.500-4-7.500h7z" fill="#fdfdfd" stroke="#2a2a2a" strokeWidth="1.600" />
            </Pointer>
          </Dialog>
        </DialogLayer>
      </Workspace>

      <TaskBar>
        <StartButton aria-label="Start"><WindowsLogo /></StartButton>
        <TaskSearch>
          <svg width="15" height="15" viewBox="0 0 15 15" fill="none" stroke="#2a2a2c" strokeWidth="1.300"><circle cx="9" cy="6" r="4.500" /><path d="M5.500 9.500L1 14" /></svg>
          <input type="text" placeholder="Type here to search" />
          <Wolf />
        </TaskSearch>
        <TaskApps>
          {taskApps.map((a) => <TaskApp key={a.name} aria-label={a.name} $open={a.open} $active={a.active}>{a.icon}</TaskApp>)}
        </TaskApps>
        <Tray>
          <Weather>
            <svg width="21" height="20" viewBox="0 0 21 20"><circle cx="10" cy="10" r="8" fill="#f6b73a" /><path d="M1 10h17M2 13.500h16M4 17h12" stroke="#f08a3c" strokeWidth="2" /><path d="M3 11.700h16M4 15.200h12" stroke="#fde7b0" /><circle cx="15.500" cy="5" r="4.800" fill="#c8202c" /><path d="M14.500 4l1.200-1v4.500" stroke="#fff" fill="none" /></svg>
            <span>27°C</span><span>Kabut</span>
          </Weather>
          {trayIcons.map((icon, i) => <IconButton key={i} $w={20} aria-label={`Tray ${i + 1}`}>{icon}</IconButton>)}
          <Clock>7:49<br />07/11/2024</Clock>
          <IconButton $w={43} aria-label="Notifications">
            <svg width="15" height="15" viewBox="0 0 15 15"><path d="M0 0h14v11H7l-3 3v-3H0z" fill="#f2f2f2" /><path d="M3 3h8M3 5.500h8M3 8h5" stroke="#3a382e" /><circle cx="11.500" cy="10.500" r="3.500" fill="#3a382e" /><path d="M13.500 12a3 3 0 0 1-3-4 3 3 0 1 0 3 4z" fill="#f2f2f2" /></svg>
          </IconButton>
          <TrayEnd />
        </Tray>
      </TaskBar>
    </Screen>
  );
}
